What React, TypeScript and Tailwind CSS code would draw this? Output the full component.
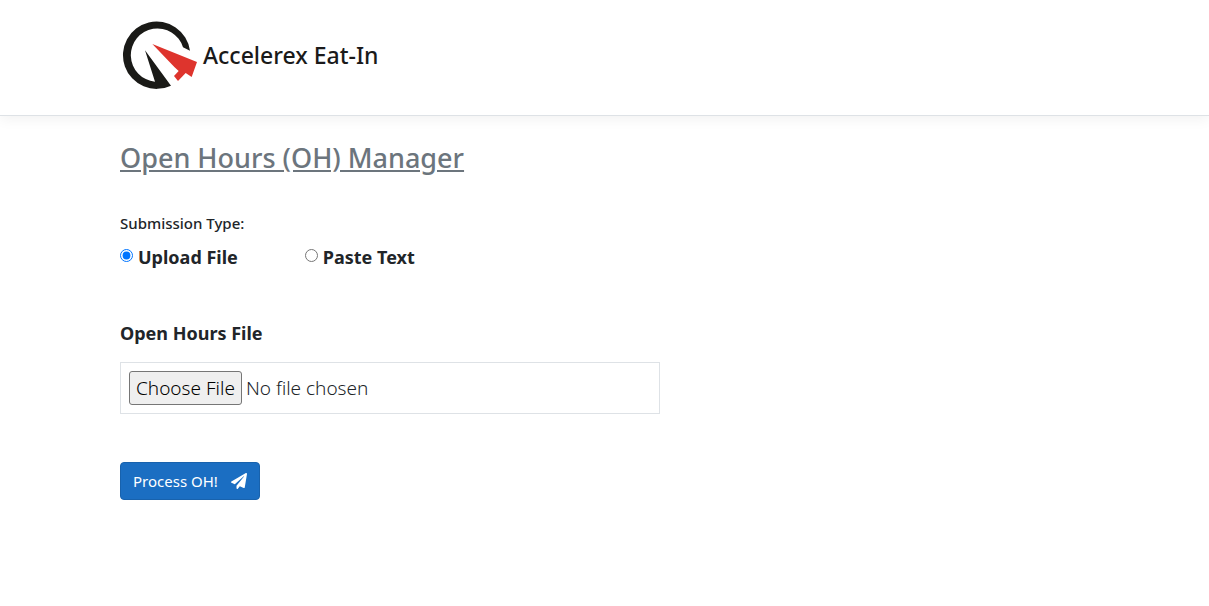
import { useState } from "react";
import { FaPaperPlane } from "react-icons/fa";

function Logo() {
  return (
    <svg viewBox="0 0 225 210" className="h-[70px] w-[75px]" aria-hidden="true">
      <path
        fill="#1a1a17"
        d="M204 92A101 101 0 1 0 147 197L69 91L99 185A80 80 0 1 1 183 82Z"
      />
      <path
        fill="#de342d"
        d="M91 72L225 126L209 171L191 159L168 183L156 168L170 153L157 141Z"
      />
    </svg>
  );
}

type Mode = "file" | "text";

export default function App() {
  const [mode, setMode] = useState<Mode>("file");

  return (
    <div className="font-['Noto_Sans','Open_Sans',sans-serif] text-[#212529]">
      <header className="flex items-center gap-1.5 border-b border-[#dee2e6] px-[122px] pt-5 pb-[25px] shadow-[0_4px_12px_rgba(0,0,0,0.05)]">
        <Logo />
        <span className="text-[23px] font-medium text-[#1a1a1a]">Accelerex Eat-In</span>
      </header>

      <main className="px-[120px] pt-6">
        <h1 className="text-[27px] leading-9 font-medium text-[#6c757d] underline">
          Open Hours (OH) Manager
        </h1>

        <form className="max-w-[540px]" onSubmit={(e) => e.preventDefault()}>
          <fieldset className="mt-[35px]">
            <legend className="text-[15px] leading-6 font-medium">Submission Type:</legend>
            <div className="mt-2 flex gap-[67px]">
              <label className="flex items-center gap-[5px] text-lg font-bold">
                <input type="radio" name="mode" className="mb-1 size-[13px]" checked={mode === "file"} onChange={() => setMode("file")} />
                Upload File
              </label>
              <label className="flex items-center gap-[5px] text-lg font-bold">
                <input type="radio" name="mode" className="mb-1 size-[13px]" checked={mode === "text"} onChange={() => setMode("text")} />
                Paste Text
              </label>
            </div>
          </fieldset>

          <label htmlFor="hours" className="mt-12 block text-lg font-bold">
            Open Hours File
          </label>
          <input
            id="hours"
            type="file"
            className="mt-[15px] block w-full border border-[#dee2e6] p-2 text-[19px] leading-7 font-light file:mr-1 file:rounded-[3px] file:border file:border-solid file:border-[#767676] file:bg-[#efefef] file:px-[6px] file:py-0.5 file:text-black"
          />

          <button
            type="submit"
            className="mt-12 flex h-[38px] items-center gap-[13px] rounded border border-[#1862ad] bg-[#1b6ec2] px-3 text-[15px] text-white"
          >
            Process OH!
            <FaPaperPlane className="size-4" aria-hidden="true" />
          </button>
        </form>
      </main>
    </div>
  );
}
